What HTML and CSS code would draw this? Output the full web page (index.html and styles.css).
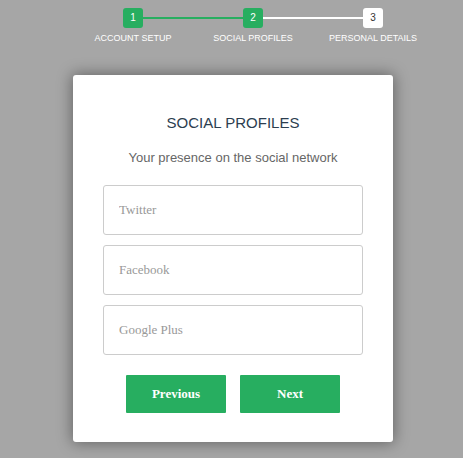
FILE: index.html
```html
<!DOCTYPE html>
<html>
<head>
<meta charset="utf-8">
<link rel="stylesheet" href="styles.css">
</head>
<body>
<div class="page">
  <ul class="progress">
    <li class="step done"><span class="num">1</span><span class="label">Account Setup</span></li>
    <li class="step done"><span class="num">2</span><span class="label">Social Profiles</span></li>
    <li class="step"><span class="num">3</span><span class="label">Personal Details</span></li>
  </ul>
  <form class="card">
    <h2 class="title">Social Profiles</h2>
    <h3 class="subtitle">Your presence on the social network</h3>
    <input class="field" type="text" placeholder="Twitter">
    <input class="field" type="text" placeholder="Facebook">
    <input class="field" type="text" placeholder="Google Plus">
    <div class="actions">
      <button type="button" class="btn">Previous</button>
      <button type="button" class="btn">Next</button>
    </div>
  </form>
</div>
</body>
</html>
```
FILE: styles.css
```css
* { margin: 0; padding: 0; box-sizing: border-box; }
html, body { height: 100%; }
body {
  background: #a6a6a6;
  font-family: "Liberation Sans", Arial, sans-serif;
}
.page {
  padding: 8px 0 0 73px;
}
.progress {
  list-style: none;
  display: flex;
  width: 360px;
  margin-bottom: 31px;
}
.step {
  width: 120px;
  position: relative;
  display: flex;
  flex-direction: column;
  align-items: center;
  color: #fff;
  font-size: 9px;
  text-transform: uppercase;
}
.num {
  width: 20px;
  height: 20px;
  line-height: 20px;
  text-align: center;
  font-size: 10px;
  color: #333;
  background: #fff;
  border-radius: 3px;
  margin-bottom: 5px;
  position: relative;
  z-index: 1;
}
.step.done .num {
  background: #27ae60;
  color: #fff;
}
.step + .step::after {
  content: "";
  position: absolute;
  left: -60px;
  top: 9px;
  width: 120px;
  height: 2px;
  background: #fff;
}
.step.done + .step.done::after {
  background: #27ae60;
}
.label { line-height: 11px; }
.card {
  width: 320px;
  background: #fff;
  border-radius: 3px;
  box-shadow: 0 0 15px 1px rgba(0, 0, 0, 0.4);
  padding: 39px 30px 29px;
  display: flex;
  flex-direction: column;
  align-items: center;
}
.title {
  font-size: 15px;
  font-weight: normal;
  color: #2c3e50;
  text-transform: uppercase;
  line-height: 17px;
  margin-bottom: 19px;
}
.subtitle {
  font-size: 13px;
  font-weight: normal;
  color: #666;
  line-height: 15px;
  margin-bottom: 20px;
}
.field {
  width: 260px;
  height: 50px;
  padding: 15px;
  border: 1px solid #ccc;
  border-radius: 3px;
  margin-bottom: 10px;
  font-family: "Liberation Serif", "Times New Roman", serif;
  font-size: 13px;
  color: #2c3e50;
  background: #fff;
}
.field::placeholder { color: #999; }
.actions {
  display: flex;
  gap: 14px;
  margin-top: 10px;
}
.btn {
  width: 100px;
  height: 38px;
  background: #27ae60;
  color: #fff;
  border: 0;
  border-radius: 1px;
  font-family: "Liberation Serif", "Times New Roman", serif;
  font-weight: bold;
  font-size: 13px;
}
```
